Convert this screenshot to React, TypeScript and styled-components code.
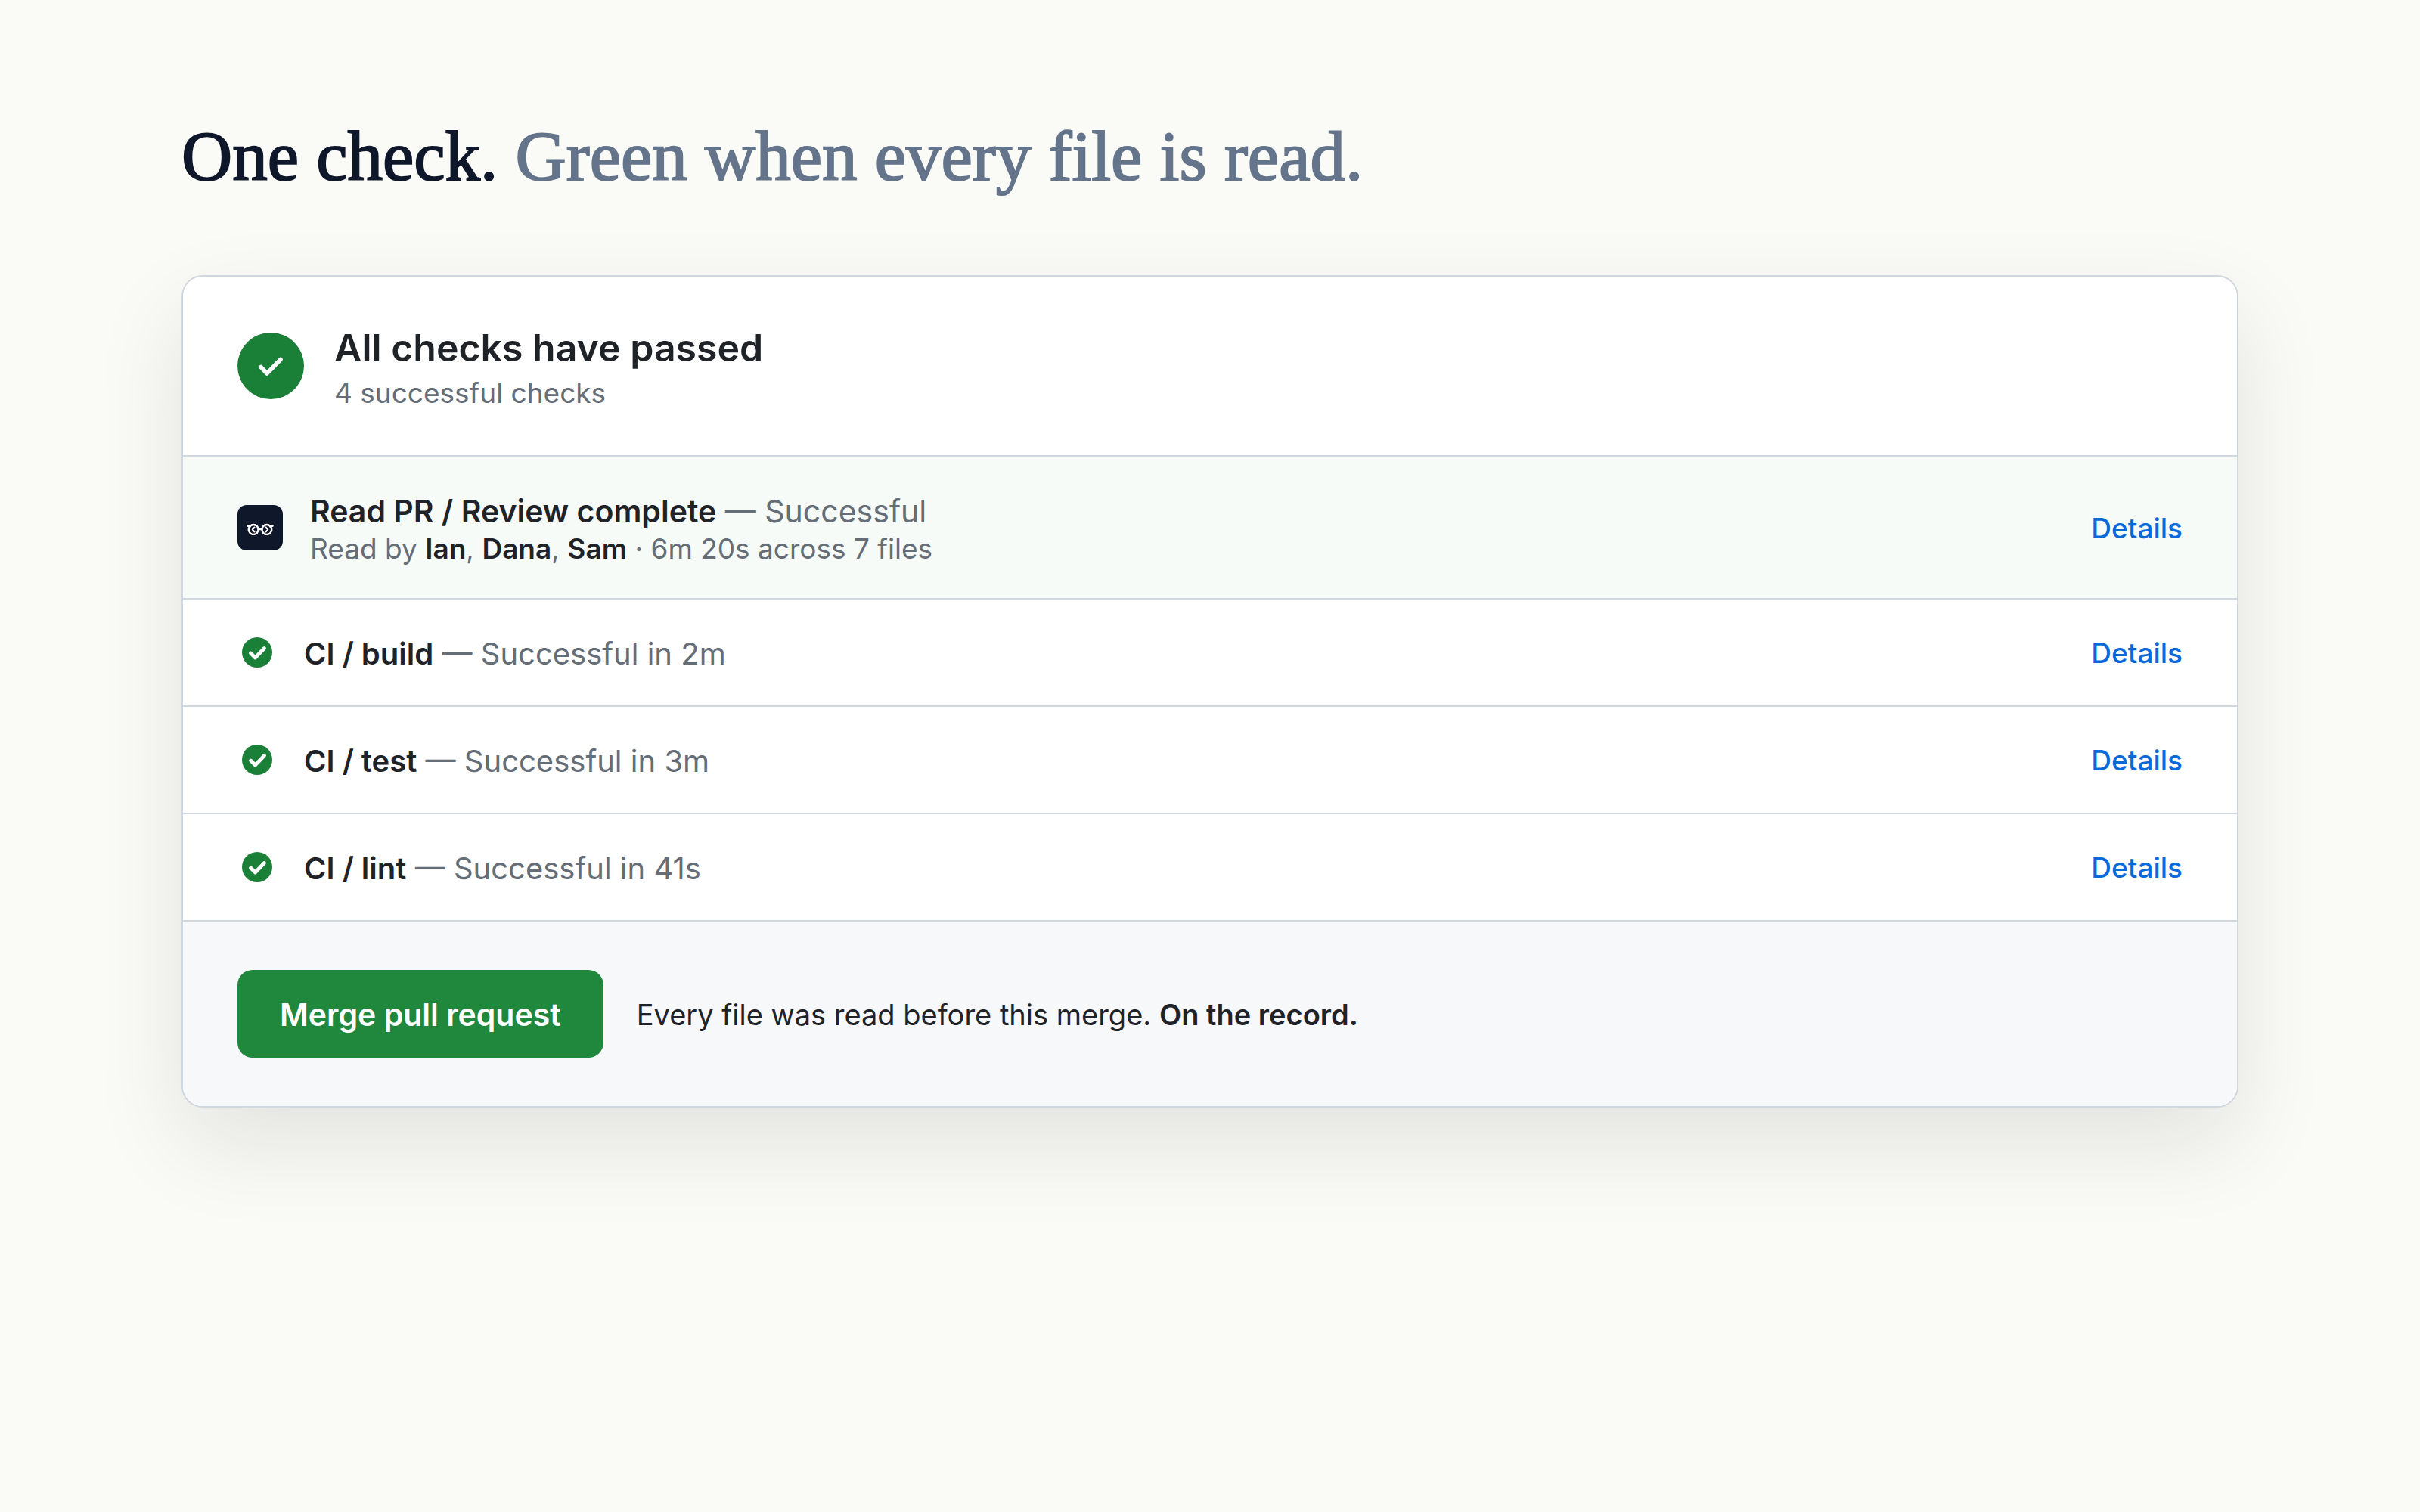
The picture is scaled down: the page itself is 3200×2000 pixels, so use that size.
import React from "react";
import styled, { createGlobalStyle } from "styled-components";

const GlobalStyle = createGlobalStyle`
  * { box-sizing: border-box; }
  html, body { margin: 0; }
  body {
    min-height: 100vh;
    background: #fafaf6;
    color: #1f2328;
    font-family: Inter, "Liberation Sans", sans-serif;
    -webkit-font-smoothing: antialiased;
  }
  h1, h2, p, ul { margin: 0; padding: 0; }
`;

const Page = styled.main`
  padding: 144px 240px;
`;

const Headline = styled.h1`
  margin-bottom: 94px;
  font: 400 93px/126px "Liberation Serif", serif;
  font-variant-ligatures: none;
  -webkit-text-stroke: 2px currentColor;
  color: #0f172a;
`;

const Muted = styled.span`
  color: #64748b;
`;

const Card = styled.section`
  overflow: hidden;
  border: 2px solid #d0d7de;
  border-radius: 28px;
  background: #ffffff;
  box-shadow: 0 48px 120px rgba(15, 23, 42, 0.1);
`;

const CardHeader = styled.header`
  display: flex;
  align-items: center;
  gap: 40px;
  padding: 56px 72px;
  border-bottom: 2px solid #d0d7de;
`;

const PassedBadge = styled.span`
  display: grid;
  place-items: center;
  width: 88px;
  height: 88px;
  border-radius: 50%;
  background: #1a7f37;
`;

const Summary = styled.div`
  padding-top: 4px;
`;

const Title = styled.h2`
  font-size: 50px;
  line-height: 68px;
  font-weight: 600;
`;

const Subtitle = styled.p`
  font-size: 37px;
  line-height: 52px;
  color: #656d76;
`;

const CheckList = styled.ul`
  list-style: none;
`;

const CheckRow = styled.li<{ $featured?: boolean }>`
  display: flex;
  align-items: center;
  gap: 36px;
  padding: 42px 72px;
  border-bottom: 2px solid #d0d7de;
  background: ${(p) => (p.$featured ? "#f6fbf7" : "transparent")};
`;

const AppMark = styled.span`
  display: grid;
  place-items: center;
  width: 60px;
  height: 60px;
  border-radius: 12px;
  background: #0f172a;
`;

const CheckText = styled.div`
  flex: 1;
  padding-top: 4px;
  color: #656d76;
`;

const CheckLine = styled.p<{ $compact?: boolean }>`
  font-size: ${(p) => (p.$compact ? "40px" : "41px")};
  line-height: 52px;
`;

const ReaderLine = styled.p`
  font-size: 37px;
  line-height: 47px;
`;

const Strong = styled.strong`
  font-weight: 600;
  color: #1f2328;
`;

const DetailsLink = styled.a`
  padding-top: 2px;
  font-size: 37px;
  line-height: 52px;
  font-weight: 500;
  color: #0969da;
  text-decoration: none;
`;

const CardFooter = styled.footer`
  display: flex;
  align-items: center;
  gap: 44px;
  padding: 64px 72px;
  background: #f6f8fa;
`;

const MergeButton = styled.button`
  padding: 33px 56px 31px;
  border: 0;
  border-radius: 20px;
  background: #1f883d;
  color: #ffffff;
  font-family: inherit;
  font-size: 41px;
  line-height: 52px;
  font-weight: 600;
`;

const FooterNote = styled.p`
  padding-top: 2px;
  font-size: 38px;
  line-height: 52px;
`;

const PassedTick = () => (
  <svg width="40" height="40" viewBox="0 0 40 40" fill="none" aria-hidden="true">
    <path d="M7 21.500 15 30 33 11.500" stroke="#fff" strokeWidth="5.500" strokeLinecap="round" strokeLinejoin="round" />
  </svg>
);

const RowTick = () => (
  <svg width="52" height="52" viewBox="0 0 52 52" fill="none" aria-hidden="true">
    <circle cx="26" cy="26" r="20" fill="#1a7f37" />
    <path d="M17.500 27 23.500 33 35.500 20.500" stroke="#fff" strokeWidth="4.800" strokeLinecap="round" strokeLinejoin="round" />
  </svg>
);

const Glasses = () => (
  <svg width="36" height="20" viewBox="0 0 36 20" fill="none" stroke="#fff" strokeWidth="2.500" strokeLinecap="round" strokeLinejoin="round" aria-hidden="true">
    <circle cx="9.200" cy="12.500" r="6.400" />
    <circle cx="26.800" cy="12.500" r="6.400" />
    <path d="M15.600 12h4.800M1.500 7.500 4.500 8.500M34.500 7.500 31.500 8.500" />
    <path d="M10.500 9.500 7.800 12.500l2.700 3M25.500 9.500l2.700 3-2.700 3" strokeWidth="2" />
  </svg>
);

const ciChecks = [
  { name: "CI / build", result: "Successful in 2m" },
  { name: "CI / test", result: "Successful in 3m" },
  { name: "CI / lint", result: "Successful in 41s" },
];

export default function App() {
  return (
    <>
      <GlobalStyle />
      <Page>
        <Headline>
          One check. <Muted>Green when every file is read.</Muted>
        </Headline>
        <Card>
          <CardHeader>
            <PassedBadge>
              <PassedTick />
            </PassedBadge>
            <Summary>
              <Title>All checks have passed</Title>
              <Subtitle>4 successful checks</Subtitle>
            </Summary>
          </CardHeader>
          <CheckList>
            <CheckRow $featured>
              <AppMark>
                <Glasses />
              </AppMark>
              <CheckText>
                <CheckLine>
                  <Strong>Read PR / Review complete</Strong> — Successful
                </CheckLine>
                <ReaderLine>
                  Read by <Strong>Ian</Strong>, <Strong>Dana</Strong>, <Strong>Sam</Strong> · 6m 20s across 7 files
                </ReaderLine>
              </CheckText>
              <DetailsLink href="#review">Details</DetailsLink>
            </CheckRow>
            {ciChecks.map((check) => (
              <CheckRow key={check.name}>
                <RowTick />
                <CheckText>
                  <CheckLine $compact>
                    <Strong>{check.name}</Strong> — {check.result}
                  </CheckLine>
                </CheckText>
                <DetailsLink href="#ci">Details</DetailsLink>
              </CheckRow>
            ))}
          </CheckList>
          <CardFooter>
            <MergeButton type="button">Merge pull request</MergeButton>
            <FooterNote>
              Every file was read before this merge. <Strong>On the record.</Strong>
            </FooterNote>
          </CardFooter>
        </Card>
      </Page>
    </>
  );
}
